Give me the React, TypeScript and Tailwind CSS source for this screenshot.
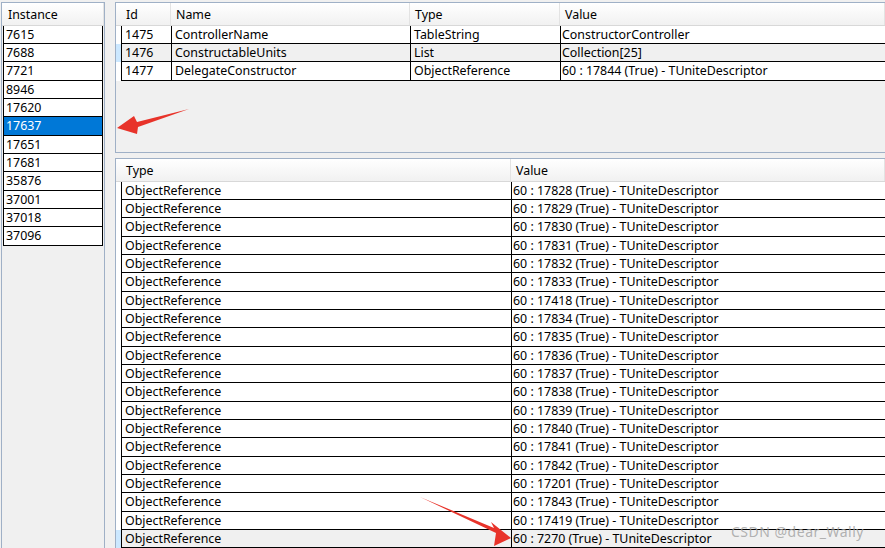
import React from 'react';

const FONT = { fontFamily: '"Noto Sans", "Liberation Sans", sans-serif' };

const instances = ['7615', '7688', '7721', '8946', '17620', '17637', '17651', '17681', '35876', '37001', '37018', '37096'];

const props = [
  ['1475', 'ControllerName', 'TableString', 'ConstructorController'],
  ['1476', 'ConstructableUnits', 'List', 'Collection[25]'],
  ['1477', 'DelegateConstructor', 'ObjectReference', '60 : 17844 (True) - TUniteDescriptor'],
];

const refs = [
  '17828', '17829', '17830', '17831', '17832', '17833', '17418', '17834', '17835', '17836',
  '17837', '17838', '17839', '17840', '17841', '17842', '17201', '17843', '17419', '7270',
];

// rows are ~18.33px apart in the capture: 18, 18, 19 repeating
const rowH = (i: number) => (i % 3 === 2 ? 'h-[19px]' : 'h-[18px]');

function HeaderCell({ label, className = '' }: { label: string; className?: string }) {
  return (
    <div className={`h-full flex items-center pl-[5px] pt-[2px] border-r border-[#e3e3e3] ${className}`}>
      {label}
    </div>
  );
}

function Header({ children, tall = true }: { children: React.ReactNode; tall?: boolean }) {
  return (
    <div
      className={`${tall ? 'h-[23px]' : 'h-[23px]'} flex bg-gradient-to-b from-white to-[#f1f1f1] border-b border-[#d8d8d8] text-[12.4px] text-black`}
    >
      {children}
    </div>
  );
}

export default function App() {
  return (
    <div className="relative w-[885px] h-[548px] overflow-hidden bg-[#f0f0f0] flex pt-[2px] text-black" style={FONT}>
      {/* Instance list */}
      <div className="ml-[1px] w-[104px] h-full border-l border-t border-r border-[#9fb0c6] flex flex-col">
        <Header>
          <HeaderCell label="Instance" className="w-full pl-[6px]" />
        </Header>
        <div className="ml-[1px] mr-[1px] text-[12.4px]">
          {instances.map((n, i) => (
            <div
              key={n}
              className={`${rowH(i)} flex items-center pl-[2px] pt-[1px] border-l border-r border-b border-black ${
                n === '17637' ? 'bg-[#0078d7] text-white' : 'bg-white'
              }`}
            >
              {n}
            </div>
          ))}
        </div>
      </div>

      <div className="ml-[10px] flex-1 flex flex-col">
        {/* Properties */}
        <div className="h-[153px] border-l border-t border-b border-[#9fb0c6] flex flex-col">
          <Header>
            <div className="w-[5px]" />
            <HeaderCell label="Id" className="w-[50px]" />
            <HeaderCell label="Name" className="w-[239px]" />
            <HeaderCell label="Type" className="w-[150px]" />
            <HeaderCell label="Value" className="flex-1" />
          </Header>
          <div className="text-[12.4px]">
            {props.map((r, i) => (
              <div key={r[0]} className={`${rowH(i)} flex`}>
                <div className={`w-[5px] ${i === 1 ? 'bg-[#cce8ff]' : 'bg-white'}`} />
                <div className={`flex-1 flex border-b border-black ${i === 1 ? 'bg-[#f0f0f0]' : 'bg-white'}`}>
                  <div className="w-[50px] border-l border-black pl-[3px] pt-[1px] flex items-center">{r[0]}</div>
                  <div className="w-[239px] border-l border-black pl-[3px] pt-[1px] flex items-center">{r[1]}</div>
                  <div className="w-[150px] border-l border-black pl-[3px] pt-[1px] flex items-center">{r[2]}</div>
                  <div className="flex-1 border-l border-black pl-[1px] pt-[1px] flex items-center">{r[3]}</div>
                </div>
              </div>
            ))}
          </div>
        </div>

        {/* Collection items */}
        <div className="mt-[5px] flex-1 border-l border-t border-[#9fb0c6] bg-white flex flex-col">
          <Header>
            <div className="w-[5px]" />
            <HeaderCell label="Type" className="w-[390px]" />
            <HeaderCell label="Value" className="flex-1" />
          </Header>
          <div className="text-[12.4px]">
            {refs.map((id, i) => {
              const last = i === refs.length - 1;
              return (
                <div key={id + i} className={`${rowH(i)} flex`}>
                  <div className={`w-[5px] ${last ? 'bg-[#cce8ff]' : 'bg-white'}`} />
                  <div className={`flex-1 flex border-b border-black ${last ? 'bg-[#f0f0f0]' : 'bg-white'}`}>
                    <div className="w-[390px] border-l border-black pl-[3px] pt-[1px] flex items-center">ObjectReference</div>
                    <div className="flex-1 border-l border-black pl-[1px] pt-[1px] flex items-center">
                      60 : {id} (True) - TUniteDescriptor
                    </div>
                  </div>
                </div>
              );
            })}
          </div>
        </div>
      </div>

      {/* annotation arrows */}
      <svg className="absolute left-0 top-0 pointer-events-none" width="885" height="548">
        <polygon points="189,109 137,122 134,116 117,128 137,134 138,127" fill="#e8332a" />
        <polygon points="420,497 494,528 491,522 511,538 494,546 496,533" fill="#e8332a" />
      </svg>

      {/* watermark */}
      <div className="absolute left-[731px] top-[521px] text-[14px] text-[#a0a0a0]/80 tracking-[0.5px] pointer-events-none">
        CSDN @dear_Wally
      </div>
    </div>
  );
}
